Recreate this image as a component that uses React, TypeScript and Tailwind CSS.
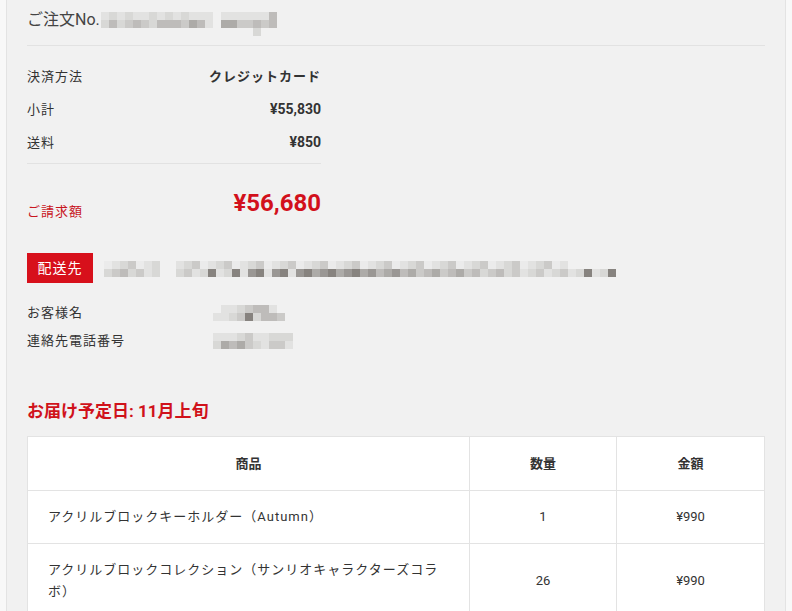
const shades = [
  'transparent',
  '#ebebeb',
  '#e2e2e1',
  '#d8d8d6',
  '#cbcac8',
  '#bebcba',
  '#adaba8',
  '#9a9794',
  '#87837f',
  '#726d68',
];

// deterministic pseudo-random mosaic rows for the masked personal data
function makeRow(len: number, seed: number, lo: number, hi: number, gaps: number[] = []) {
  let s = '';
  for (let i = 0; i < len; i++) {
    if (gaps.includes(i)) {
      s += '.';
      continue;
    }
    const h = ((i + 3) * 2654435761 + seed * 40503) >>> 0;
    s += String(lo + (h % (hi - lo + 1)));
  }
  return s;
}

function Mosaic({ rows }: { rows: string[] }) {
  return (
    <div className="flex flex-col" aria-hidden>
      {rows.map((r, ri) => (
        <div key={ri} className="flex">
          {r.split('').map((c, ci) => (
            <span
              key={ci}
              className="size-2 shrink-0"
              style={{ backgroundColor: c === '.' ? 'transparent' : shades[Number(c)] }}
            />
          ))}
        </div>
      ))}
    </div>
  );
}

const orderNo = [
  '23232232323222.2222225',
  '35345435554652.6644545',
  '...................3..',
];

const address = [
  makeRow(64, 7, 1, 4, [7, 8, 58, 59, 60, 61, 62, 63]),
  makeRow(64, 11, 2, 8, [7, 8]),
];

const customer = ['.2234552.', '223483554'];
const phone = ['2223422333', '3656432442'];

const items = [
  { name: 'アクリルブロックキーホルダー（Autumn）', qty: '1', price: '¥990' },
  { name: 'アクリルブロックコレクション（サンリオキャラクターズコラボ）', qty: '26', price: '¥990' },
];

export default function App() {
  return (
    <div className="min-h-screen bg-[#f8f8f8] font-['Roboto','Noto_Sans_CJK_JP',sans-serif] text-[#333]">
      <div className="mx-[6px] min-h-screen border-x border-[#e3e3e3] bg-[#f1f1f1] px-5">
        {/* order number */}
        <div className="flex h-[46px] items-center border-b border-[#e2e2e2] pb-[5px]">
          <span className="text-[16px] leading-[22px] text-[#444]">ご注文No.</span>
          <div className="ml-[1px] mt-[8px]">
            <Mosaic rows={orderNo} />
          </div>
        </div>

        {/* payment summary */}
        <div className="w-[294px]">
          <div className="border-b border-[#e2e2e2] pb-[4px] pt-[14px] text-[13px]">
            <div className="flex h-[33px] items-center justify-between">
              <span className="tracking-[1px]">決済方法</span>
              <span className="font-bold tracking-[1px]">クレジットカード</span>
            </div>
            <div className="flex h-[33px] items-center justify-between">
              <span className="tracking-[1px]">小計</span>
              <span className="text-[14px] font-bold">¥55,830</span>
            </div>
            <div className="flex h-[33px] items-center justify-between">
              <span className="tracking-[1px]">送料</span>
              <span className="text-[14px] font-bold">¥850</span>
            </div>
          </div>
          <div className="flex items-end justify-between pt-[24px]">
            <span className="-mb-1 text-[13px] leading-5 tracking-[1px] text-[#c8161f]">ご請求額</span>
            <span className="text-[24px] font-bold leading-[30px] text-[#d2101c]">¥56,680</span>
          </div>
        </div>

        {/* shipping */}
        <div className="mt-[35px] flex items-center">
          <span className="flex h-[30px] w-[66px] items-center justify-center bg-[#d7101b] text-[14px] tracking-[1px] text-white">
            配送先
          </span>
          <div className="ml-[11px] mt-[2px]">
            <Mosaic rows={address} />
          </div>
        </div>

        <div className="mt-4 text-[13px]">
          <div className="flex h-7 items-center">
            <span className="w-[186px] tracking-[1px]">お客様名</span>
            <Mosaic rows={customer} />
          </div>
          <div className="flex h-7 items-center">
            <span className="w-[186px] tracking-[1px]">連絡先電話番号</span>
            <Mosaic rows={phone} />
          </div>
        </div>

        {/* delivery */}
        <h2 className="mt-[44px] text-[17px] font-bold leading-6 text-[#d0121b]">お届け予定日: 11月上旬</h2>

        <table className="mt-[13px] w-full table-fixed border-collapse border border-[#e3e3e3] bg-white text-[13px]">
          <colgroup>
            <col className="w-[442px]" />
            <col className="w-[147px]" />
            <col />
          </colgroup>
          <thead>
            <tr className="h-[54px]">
              <th className="border border-[#e3e3e3] font-bold">商品</th>
              <th className="border border-[#e3e3e3] font-bold">数量</th>
              <th className="border border-[#e3e3e3] font-bold">金額</th>
            </tr>
          </thead>
          <tbody>
            {items.map((it, i) => (
              <tr key={i} className={i === 0 ? 'h-[53px]' : ''}>
                <td className="border border-[#e3e3e3] px-5 py-[15px] text-left leading-[22px] tracking-[1px]">
                  {it.name}
                </td>
                <td className="border border-[#e3e3e3] text-center">{it.qty}</td>
                <td className="border border-[#e3e3e3] text-center">{it.price}</td>
              </tr>
            ))}
          </tbody>
        </table>
        <div className="h-10" />
      </div>
    </div>
  );
}
